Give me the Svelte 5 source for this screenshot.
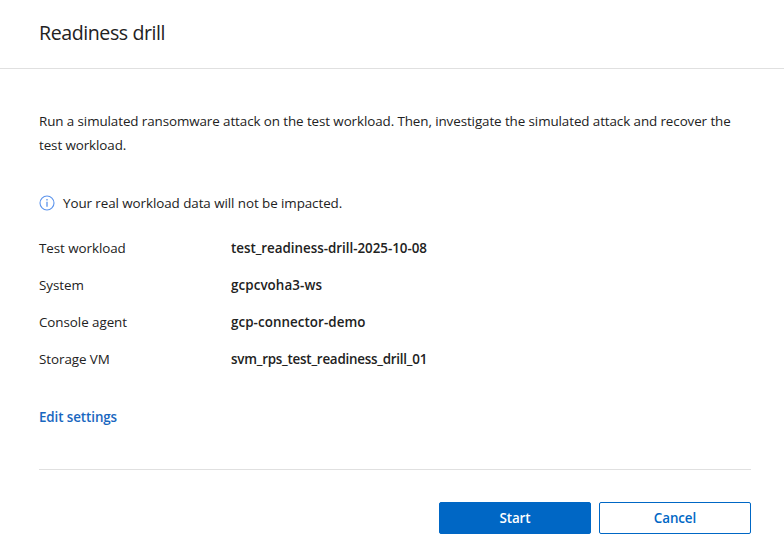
<script>
  const details = [
    { label: 'Test workload', value: 'test_readiness-drill-2025-10-08', tracking: -0.03 },
    { label: 'System', value: 'gcpcvoha3-ws', tracking: 0.08 },
    { label: 'Console agent', value: 'gcp-connector-demo', tracking: 0.06 },
    { label: 'Storage VM', value: 'svm_rps_test_readiness_drill_01', tracking: -0.24 }
  ];
</script>

<div class="dialog">
  <header><h1>Readiness drill</h1></header>
  <main>
    <p class="intro">Run a simulated ransomware attack on the test workload. Then, investigate the simulated attack and recover the<br />test workload.</p>
    <div class="notice">
      <svg width="16" height="16" viewBox="0 0 16 16" fill="none" stroke="#5b93ec" stroke-width="1.1">
        <circle cx="8" cy="8" r="7" />
        <path d="M8 6.8v5M8 4v1.4" stroke-width="1.3" />
      </svg>
      <span>Your real workload data will not be impacted.</span>
    </div>
    <dl>
      {#each details as item}
        <div class="row"><dt>{item.label}</dt><dd style:letter-spacing="{item.tracking}px">{item.value}</dd></div>
      {/each}
    </dl>
    <a href="#settings">Edit settings</a>
  </main>
  <footer>
    <button class="primary">Start</button>
    <button>Cancel</button>
  </footer>
</div>

<style>
  :global(body) { margin: 0; background: #fff; }
  .dialog { width: 784px; height: 560px; overflow: hidden; box-sizing: border-box; font: 13.4px/24px "Open Sans", "Noto Sans", sans-serif; color: #222; background: #fff; }
  header { box-sizing: border-box; height: 69px; border-bottom: 1px solid #e0e0e0; padding: 18px 39px; }
  h1 { margin: 0; font-size: 19.6px; line-height: 30px; font-weight: 400; letter-spacing: -0.43px; }
  main { padding: 40px 33px 0 39px; height: 400px; box-sizing: border-box; }
  .intro { margin: 0; white-space: nowrap; letter-spacing: -0.09px; }
  .notice { display: flex; align-items: center; gap: 8px; height: 24px; margin-top: 34px; letter-spacing: -0.07px; }
  dl { margin: 15px 0 0; }
  .row { display: flex; height: 37px; line-height: 37px; }
  dt { width: 192px; letter-spacing: -0.06px; }
  dd { margin: 0; font-weight: 600; }
  a { display: block; margin-top: 27px; color: #1967c0; font-weight: 600; text-decoration: none; letter-spacing: -0.1px; }
  footer { margin: 0 33px 0 39px; border-top: 1px solid #e0e0e0; padding-top: 32px; display: flex; justify-content: flex-end; gap: 8px; }
  button { width: 152px; height: 32px; box-sizing: border-box; border: 1px solid #0067c5; border-radius: 2px; background: #fff; color: #0067c5; font: 600 13.4px "Open Sans", sans-serif; letter-spacing: -0.1px; padding: 0; }
  .primary { background: #0067c5; color: #fff; }
</style>
